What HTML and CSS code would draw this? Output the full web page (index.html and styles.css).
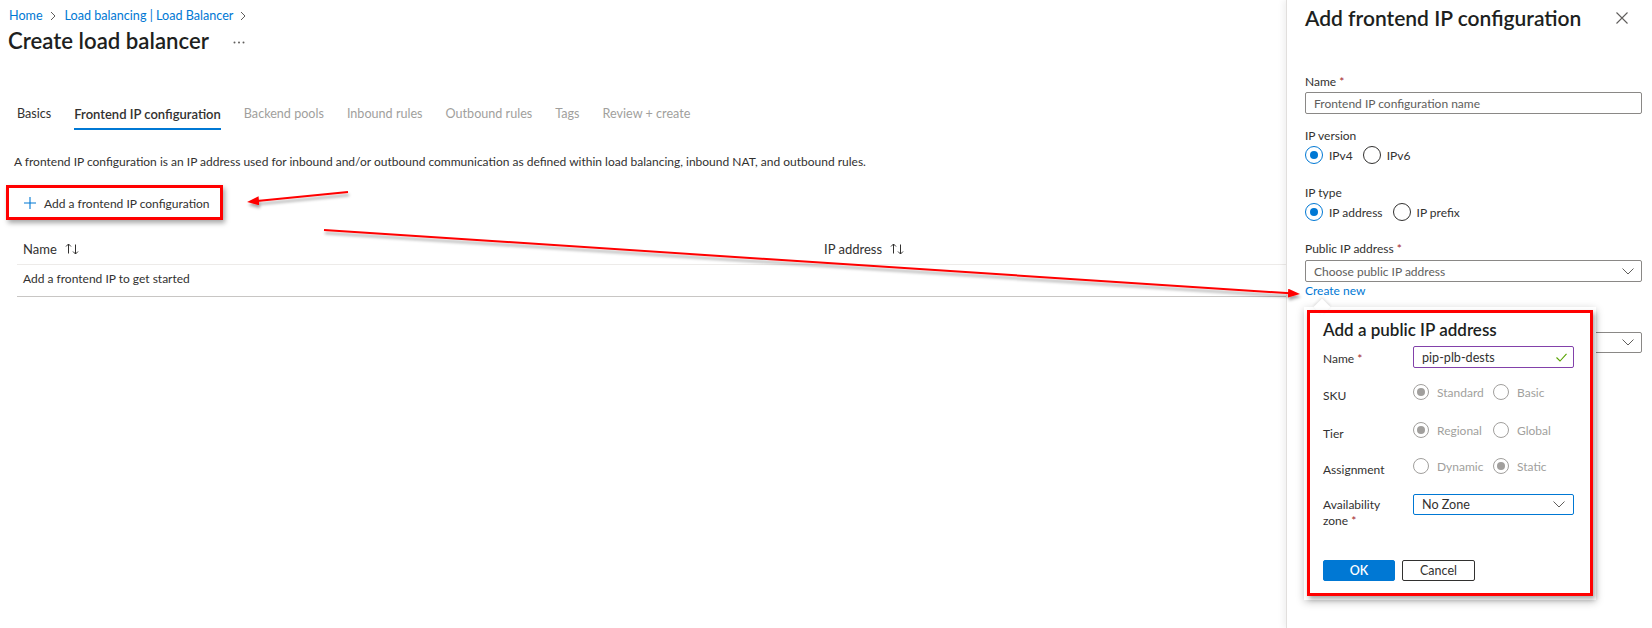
FILE: index.html
```html
<!DOCTYPE html>
<html lang="en">
<head>
<meta charset="utf-8">
<title>Create load balancer</title>
<link rel="stylesheet" href="styles.css">
</head>
<body>
<div class="page">
  <main class="blade">
    <nav class="crumbs">
      <a class="crumb">Home</a>
      <svg class="crumb-sep" width="6" height="10" viewBox="0 0 6 10"><path d="M1 1 L5 5 L1 9" fill="none" stroke="#605e5c" stroke-width="1"/></svg>
      <a class="crumb">Load balancing | Load Balancer</a>
      <svg class="crumb-sep" width="6" height="10" viewBox="0 0 6 10"><path d="M1 1 L5 5 L1 9" fill="none" stroke="#605e5c" stroke-width="1"/></svg>
    </nav>
    <div class="titlebar">
      <h1 class="title">Create load balancer</h1>
      <svg class="more" width="12" height="3" viewBox="0 0 12 3"><circle cx="1.5" cy="1.5" r="1" fill="#605e5c"/><circle cx="6" cy="1.5" r="1" fill="#605e5c"/><circle cx="10.5" cy="1.5" r="1" fill="#605e5c"/></svg>
    </div>
    <div class="tabs">
      <span class="tab">Basics</span>
      <span class="tab active">Frontend IP configuration</span>
      <span class="tab disabled">Backend pools</span>
      <span class="tab disabled">Inbound rules</span>
      <span class="tab disabled">Outbound rules</span>
      <span class="tab disabled">Tags</span>
      <span class="tab disabled">Review + create</span>
    </div>
    <p class="desc">A frontend IP configuration is an IP address used for inbound and/or outbound communication as defined within load balancing, inbound NAT, and outbound rules.</p>
    <div class="toolbar">
      <span class="add-btn">
        <svg class="plus" width="12" height="12" viewBox="0 0 12 12"><path d="M6 0 V12 M0 6 H12" stroke="#0078d4" stroke-width="1.1"/></svg>
        Add a frontend IP configuration
      </span>
    </div>
    <div class="grid">
      <div class="grid-head">
        <div class="col col-name">Name
          <svg class="sort" width="14" height="12" viewBox="0 0 14 12"><path d="M3.5 10.5 V1 M1 3.5 L3.5 1 L6 3.5 M10.5 1.5 V11 M8 8.5 L10.5 11 L13 8.5" fill="none" stroke="#323130" stroke-width="1"/></svg>
        </div>
        <div class="col col-ip">IP address
          <svg class="sort" width="14" height="12" viewBox="0 0 14 12"><path d="M3.5 10.5 V1 M1 3.5 L3.5 1 L6 3.5 M10.5 1.5 V11 M8 8.5 L10.5 11 L13 8.5" fill="none" stroke="#323130" stroke-width="1"/></svg>
        </div>
      </div>
      <div class="grid-row">Add a frontend IP to get started</div>
    </div>
  </main>

  <aside class="pane">
    <div class="pane-head">
      <h2 class="pane-title">Add frontend IP configuration</h2>
      <svg class="close" width="12" height="12" viewBox="0 0 12 12"><path d="M0.5 0.5 L11.5 11.5 M11.5 0.5 L0.5 11.5" stroke="#605e5c" stroke-width="1.1"/></svg>
    </div>
    <div class="field f-name">
      <div class="flabel">Name <span class="req">*</span></div>
      <div class="input placeholder">Frontend IP configuration name</div>
    </div>
    <div class="field f-ver">
      <div class="flabel">IP version</div>
      <div class="radios">
        <span class="radio checked"></span><span class="rlabel">IPv4</span>
        <span class="radio"></span><span class="rlabel">IPv6</span>
      </div>
    </div>
    <div class="field f-type">
      <div class="flabel">IP type</div>
      <div class="radios">
        <span class="radio checked"></span><span class="rlabel">IP address</span>
        <span class="radio"></span><span class="rlabel">IP prefix</span>
      </div>
    </div>
    <div class="field f-pip">
      <div class="flabel">Public IP address <span class="req">*</span></div>
      <div class="input select placeholder">Choose public IP address
        <svg class="chev" width="12" height="7" viewBox="0 0 12 7"><path d="M0.5 0.5 L6 6 L11.5 0.5" fill="none" stroke="#605e5c" stroke-width="1"/></svg>
      </div>
      <a class="link">Create new</a>
    </div>
    <div class="field f-ghost">
      <div class="input select">
        <svg class="chev" width="12" height="7" viewBox="0 0 12 7"><path d="M0.5 0.5 L6 6 L11.5 0.5" fill="none" stroke="#605e5c" stroke-width="1"/></svg>
      </div>
    </div>
  </aside>
</div>

<div class="callout">
  <h3 class="c-title">Add a public IP address</h3>
  <div class="c-row c-name">
    <div class="c-label">Name <span class="req">*</span></div>
    <div class="c-input">pip-plb-dests
      <svg class="check" width="11" height="9" viewBox="0 0 11 9"><path d="M0.5 4.5 L4 8 L10.5 0.8" fill="none" stroke="#57a300" stroke-width="1.1"/></svg>
    </div>
  </div>
  <div class="c-row c-sku">
    <div class="c-label">SKU</div>
    <div class="c-radios">
      <span class="cradio checked"></span><span class="crlabel w1">Standard</span>
      <span class="cradio"></span><span class="crlabel">Basic</span>
    </div>
  </div>
  <div class="c-row c-tier">
    <div class="c-label">Tier</div>
    <div class="c-radios">
      <span class="cradio checked"></span><span class="crlabel w1">Regional</span>
      <span class="cradio"></span><span class="crlabel">Global</span>
    </div>
  </div>
  <div class="c-row c-assign">
    <div class="c-label">Assignment</div>
    <div class="c-radios">
      <span class="cradio"></span><span class="crlabel w1">Dynamic</span>
      <span class="cradio checked"></span><span class="crlabel">Static</span>
    </div>
  </div>
  <div class="c-row c-avail">
    <div class="c-label">Availability<br>zone <span class="req">*</span></div>
    <div class="c-select">No Zone
      <svg class="chev" width="12" height="7" viewBox="0 0 12 7"><path d="M0.5 0.5 L6 6 L11.5 0.5" fill="none" stroke="#605e5c" stroke-width="1"/></svg>
    </div>
  </div>
  <div class="c-buttons">
    <span class="btn primary">OK</span>
    <span class="btn">Cancel</span>
  </div>
  <div class="anno-callout"></div>
</div>

<div class="anno-add"></div>

<svg class="overlay" width="1652" height="628" viewBox="0 0 1652 628">
  <defs>
    <filter id="sh" x="-5%" y="-50%" width="110%" height="300%">
      <feDropShadow dx="1" dy="3" stdDeviation="1.4" flood-color="#000" flood-opacity="0.35"/>
    </filter>
    <marker id="head" markerUnits="userSpaceOnUse" markerWidth="14" markerHeight="10" refX="2" refY="4.5" orient="auto">
      <path d="M0 0 L12 4.5 L0 9 Z" fill="#f00"/>
    </marker>
  </defs>
  <g filter="url(#sh)">
    <line x1="348" y1="192" x2="257" y2="201" stroke="#f00" stroke-width="2" marker-end="url(#head)"/>
    <line x1="324" y1="230" x2="1290" y2="293.3" stroke="#f00" stroke-width="2" marker-end="url(#head)"/>
  </g>
</svg>
</body>
</html>
```

FILE: styles.css
```css
* { box-sizing: border-box; }
html, body { margin: 0; padding: 0; }
body {
  width: 1652px;
  height: 628px;
  overflow: hidden;
  position: relative;
  background: #fff;
  font-family: "Lato", "Segoe UI", sans-serif;
  font-size: 12px;
  color: #323130;
}
.page { display: flex; height: 628px; }

/* left blade */
.blade { width: 1286px; flex: none; }
.crumbs {
  display: flex;
  align-items: center;
  padding: 7px 0 0 9px;
  line-height: 18px;
  font-size: 12.6px;
}
.crumb { color: #0078d4; }
.crumb-sep { margin: 0 9px 0 7px; }
.titlebar { display: flex; align-items: center; padding-left: 8px; }
.title {
  margin: 0;
  font-size: 22.2px;
  font-weight: 600;
  line-height: 32px;
  color: #201f1e;
}
.more { margin-left: 24px; margin-top: 2px; }

.tabs { display: flex; gap: 23px; padding-left: 17px; margin-top: 47px; font-size: 12.6px; }
.tab {
  line-height: 20px;
  padding-bottom: 4px;
  border-bottom: 2px solid transparent;
  color: #323130;
}
.tab.active { font-weight: 600; font-size: 13px; border-bottom-color: #0078d4; }
.tab.disabled { color: #a19f9d; }

.desc { margin: 22px 0 0 0; padding-left: 14px; line-height: 20px; }

.toolbar { margin-top: 15px; height: 32px; display: flex; align-items: center; }
.add-btn { display: flex; align-items: center; padding-left: 24px; gap: 8px; }

.grid { margin: 15px 0 0 17px; }
.grid-head {
  display: flex;
  height: 30px;
  align-items: center;
  border-bottom: 1px solid #edebe9;
  box-sizing: content-box;
  font-size: 13px;
}
.col { display: flex; align-items: center; }
.col-name { width: 807px; padding-left: 6px; }
.sort { margin-left: 8px; }
.grid-row {
  height: 32px;
  padding: 4px 0 0 6px;
  line-height: 20px;
  border-bottom: 1px solid #c8c6c4;
}

/* right pane */
.pane {
  flex: 1;
  position: relative;
  padding: 0 10px 0 18px;
  border-left: 1px solid #e1dfdd;
  box-shadow: -3px 0 6px rgba(0,0,0,0.06);
  background: #fff;
}
.pane-head {
  height: 36px;
  display: flex;
  align-items: center;
  justify-content: space-between;
  padding-right: 14px;
}
.pane-title { margin: 0; font-size: 21px; font-weight: 600; line-height: 32px; color: #201f1e; }
.field { display: flex; flex-direction: column; }
.flabel { line-height: 20px; }
.req { color: #a4262c; }
.f-name { margin-top: 36px; }
.f-ver { margin-top: 12px; }
.f-type { margin-top: 19px; }
.f-pip { margin-top: 18px; }
.f-ghost { margin-top: 32px; }
.input {
  height: 22px;
  border: 1px solid #8a8886;
  border-radius: 2px;
  padding: 0 8px;
  display: flex;
  align-items: center;
}
.placeholder { color: #605e5c; }
.select { justify-content: space-between; padding-right: 7px; }
.f-pip .select { margin-top: 1px; }
.f-ghost .select { justify-content: flex-end; height: 21px; }
.link { color: #0078d4; line-height: 18px; }

.radios { display: flex; align-items: center; height: 18px; }
.radio {
  width: 18px; height: 18px;
  border-radius: 50%;
  border: 1px solid #323130;
  display: flex; align-items: center; justify-content: center;
}
.radio.checked { border-color: #0078d4; }
.radio.checked::after {
  content: "";
  width: 8px; height: 8px;
  border-radius: 50%;
  background: #0078d4;
}
.rlabel { margin: 0 10px 0 6px; }

/* callout */
.callout {
  position: absolute;
  left: 1304px;
  top: 307px;
  width: 292px;
  height: 293px;
  background: #fff;
  box-shadow: 0 2px 8px rgba(0,0,0,0.22);
  padding: 12px 22px 0 19px;
  z-index: 5;
}
.callout::before {
  content: "";
  position: absolute;
  left: 12px;
  top: -6px;
  width: 12px;
  height: 12px;
  background: #fff;
  transform: rotate(45deg);
  box-shadow: -1px -1px 3px rgba(0,0,0,0.12);
}
.c-title { margin: 0; font-size: 17px; font-weight: 600; line-height: 22px; color: #201f1e; position: relative; }
.c-row { display: flex; align-items: flex-start; }
.c-label { width: 90px; flex: none; line-height: 16px; padding-top: 7px; }
.c-name { margin-top: 5px; }
.c-name .c-label { padding-top: 5px; }
.c-sku { margin-top: 13px; }
.c-tier { margin-top: 15px; }
.c-assign { margin-top: 13px; }
.c-avail { margin-top: 16px; }
.c-avail .c-label { padding-top: 3px; }
.c-input {
  width: 161px;
  height: 22px;
  border: 1px solid #8241aa;
  border-radius: 2px;
  display: flex;
  align-items: center;
  justify-content: space-between;
  padding: 0 6px 0 8px;
  font-size: 12.6px;
}
.c-select {
  width: 161px;
  height: 21px;
  border: 1px solid #0078d4;
  border-radius: 2px;
  display: flex;
  align-items: center;
  justify-content: space-between;
  padding: 0 8px 0 8px;
  font-size: 12.6px;
}
.c-radios { display: flex; align-items: center; height: 22px; color: #a19f9d; }
.cradio {
  width: 16px; height: 16px;
  border-radius: 50%;
  border: 1px solid #a19f9d;
  display: flex; align-items: center; justify-content: center;
}
.cradio.checked::after {
  content: "";
  width: 8px; height: 8px;
  border-radius: 50%;
  background: #a19f9d;
}
.crlabel { margin-left: 8px; }
.crlabel.w1 { width: 48px; margin-right: 8px; }
.c-buttons { display: flex; gap: 7px; margin-top: 31px; }
.btn {
  height: 21px;
  width: 73px;
  border: 1px solid #323130;
  border-radius: 2px;
  display: flex;
  align-items: center;
  justify-content: center;
  font-size: 12.5px;
}
.btn.primary { width: 72px; background: #0078d4; border-color: #0078d4; color: #fff; font-weight: 600; }
.anno-callout {
  position: absolute;
  left: 3px; top: 3px; right: 3px; bottom: 4px;
  border: 3px solid #f00;
  box-shadow: 2px 3px 5px rgba(0,0,0,0.35);
  pointer-events: none;
}

.anno-add {
  position: absolute;
  left: 6px;
  top: 185px;
  width: 217px;
  height: 35px;
  border: 3px solid #f00;
  box-shadow: 2px 3px 5px rgba(0,0,0,0.35);
  pointer-events: none;
}
.overlay { position: absolute; left: 0; top: 0; pointer-events: none; z-index: 10; }
```
